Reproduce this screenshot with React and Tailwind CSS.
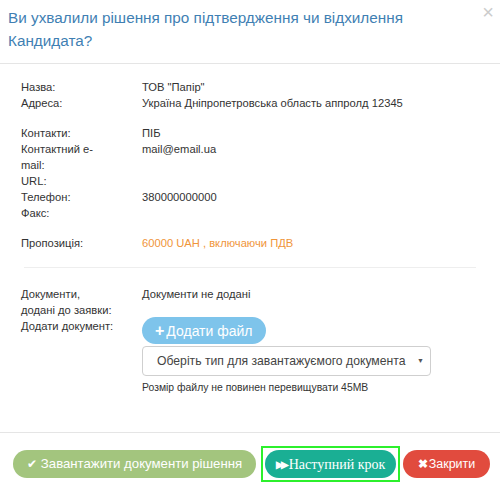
import React from "react";

const Row = ({ label, children, className = "" }) => (
  <div className={"flex " + className}>
    <div className="w-[121px] shrink-0 pr-[21px]">{label}</div>
    <div>{children}</div>
  </div>
);

const App = () => {
  return (
    <div className="w-[500px] h-[491px] bg-white text-[#333] font-[family-name:Liberation_Sans,Arial,sans-serif] relative">
      <div className="relative border-b border-[#e5e5e5] pl-[8px] pr-[60px] pt-[6px] pb-[11px]">
        <h4 className="text-[15.3px] leading-[23px] text-[#3f7fb3]">
          Ви ухвалили рішення про підтвердження чи відхилення Кандидата?
        </h4>
        <button className="absolute right-[6px] top-[2px] text-[20px] leading-[20px] text-[#cccccc]">
          ×
        </button>
      </div>

      <div className="px-[21px] pt-[15px] text-[11.2px] leading-[16px]">
        <Row label="Назва:">ТОВ "Папір"</Row>
        <Row label="Адреса:">Україна Дніпропетровська область аппролд 12345</Row>

        <Row label="Контакти:" className="mt-[14px]">ПІБ</Row>
        <Row
          label={
            <>
              Контактний e-
              <br />
              mail:
            </>
          }
        >
          mail@email.ua
        </Row>
        <Row label="URL:"></Row>
        <Row label="Телефон:">380000000000</Row>
        <Row label="Факс:"></Row>

        <Row label="Пропозиція:" className="mt-[14px]">
          <span className="text-[#f0953a]">60000 UAH , включаючи ПДВ</span>
        </Row>

        <div className="border-t border-[#eeeeee] mt-[16px] mx-[3px]"></div>

        <div className="flex mt-[18px]">
          <div className="w-[121px] shrink-0 pr-[21px]">
            <div>Документи,</div>
            <div>додані до заявки:</div>
            <div>Додати документ:</div>
          </div>
          <div>
            <div>Документи не додані</div>
            <button className="mt-[15px] h-[27px] px-[13px] rounded-full bg-[#7ec4eb] text-white text-[14px] font-medium flex items-center gap-[2px]">
              <span className="text-[16px] font-bold leading-none">+</span>Додати файл
            </button>
            <div className="mt-[2px] w-[289px] h-[30px] border border-[#cfcfcf] rounded-[4px] flex items-center justify-between pl-[14px] pr-[6px] text-[12.2px] text-[#444]">
              <span>Оберіть тип для завантажуємого документа</span>
              <span className="text-[7px] text-[#555]">▼</span>
            </div>
            <div className="mt-[4px] text-[10.4px]">Розмір файлу не повинен перевищувати 45MB</div>
          </div>
        </div>
      </div>

      <div className="absolute left-0 right-0 top-[432px] border-t border-[#e5e5e5] flex items-center pl-[13px] pt-[13px]">
        <button className="h-[28px] w-[243px] rounded-full bg-[#a3c57e] text-white text-[13.2px] flex items-center justify-center gap-[4px]">
          <span className="text-[12px]">✔</span>Завантажити документи рішення
        </button>
        <div className="border-2 border-[#2cf02c] p-[2px] ml-[5px]">
          <button className="h-[28px] w-[131px] rounded-full bg-[#1aaf94] text-white text-[14px] font-[family-name:Liberation_Serif,serif] flex items-center justify-center">
            <span className="text-[10px] font-bold tracking-[-3px] mr-[3px]">▶▶</span>Наступний крок
          </button>
        </div>
        <button className="ml-[3px] h-[28px] w-[87px] rounded-full bg-[#e14b3e] text-white text-[12.5px] flex items-center justify-center">
          <span className="font-bold text-[12px] mr-[1px]">✖</span>Закрити
        </button>
      </div>
    </div>
  );
};

export default App;
